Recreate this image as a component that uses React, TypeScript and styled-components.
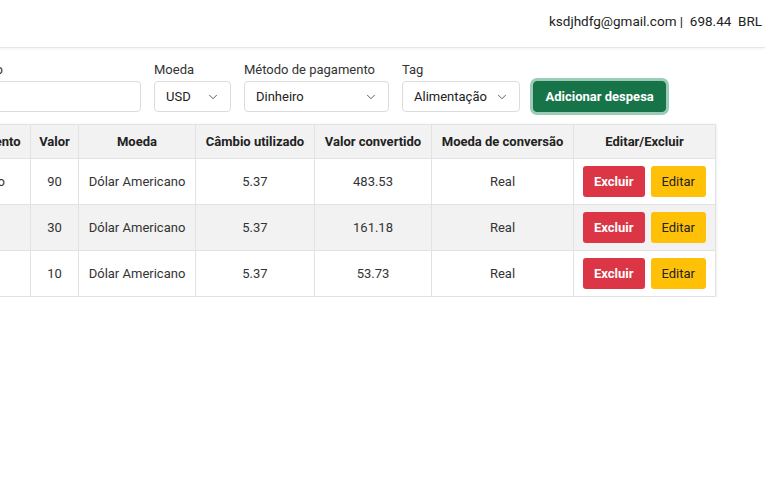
import styled, { createGlobalStyle } from "styled-components";
import { ChevronDown } from "lucide-react";

type Expense = {
  method: string;
  value: string;
  rate: string;
  converted: string;
};

const expenses: Expense[] = [
  { method: "Cartão de crédito", value: "90", rate: "5.37", converted: "483.53" },
  { method: "Dinheiro", value: "30", rate: "5.37", converted: "161.18" },
  { method: "Dinheiro", value: "10", rate: "5.37", converted: "53.73" },
];

const GlobalStyle = createGlobalStyle`
  html, body {
    margin: 0;
    padding: 0;
    background: #fff;
    overflow: hidden;
  }
  body {
    font-family: Roboto, "Liberation Sans", Arial, sans-serif;
    color: #212529;
  }
`;

const Select = ({ value, width }: { value: string; width: number }) => (
  <SelectBox $width={width}>
    <span>{value}</span>
    <ChevronDown size={14} strokeWidth={1.6} color="#555" />
  </SelectBox>
);

export default function App() {
  return (
    <>
      <GlobalStyle />
      <Header>
        <UserInfo>
          ksdjhdfg@gmail.com |&nbsp; 698.44&nbsp; BRL
        </UserInfo>
      </Header>

      <Form>
        <Field>
          <Label>Descrição</Label>
          <Input $width={196} />
        </Field>
        <Field>
          <Label>Moeda</Label>
          <Select value="USD" width={77} />
        </Field>
        <Field>
          <Label>Método de pagamento</Label>
          <Select value="Dinheiro" width={145} />
        </Field>
        <Field>
          <Label>Tag</Label>
          <Select value="Alimentação" width={118} />
        </Field>
        <AddButton>Adicionar despesa</AddButton>
      </Form>

      <Table>
        <colgroup>
          <col style={{ width: 151 }} />
          <col style={{ width: 48 }} />
          <col style={{ width: 117 }} />
          <col style={{ width: 119 }} />
          <col style={{ width: 117 }} />
          <col style={{ width: 142 }} />
          <col style={{ width: 142 }} />
        </colgroup>
        <thead>
          <tr>
            <Th>Método de pagamento</Th>
            <Th>Valor</Th>
            <Th>Moeda</Th>
            <Th>Câmbio utilizado</Th>
            <Th>Valor convertido</Th>
            <Th>Moeda de conversão</Th>
            <Th>Editar/Excluir</Th>
          </tr>
        </thead>
        <tbody>
          {expenses.map((e, i) => (
            <Row key={i} $striped={i % 2 === 1}>
              <Td>{e.method}</Td>
              <Td>{e.value}</Td>
              <Td>Dólar Americano</Td>
              <Td>{e.rate}</Td>
              <Td>{e.converted}</Td>
              <Td>Real</Td>
              <Td>
                <Actions>
                  <ActionButton $variant="danger">Excluir</ActionButton>
                  <ActionButton $variant="warning">Editar</ActionButton>
                </Actions>
              </Td>
            </Row>
          ))}
        </tbody>
      </Table>
    </>
  );
}

const Header = styled.header`
  height: 48px;
  display: flex;
  align-items: center;
  justify-content: flex-end;
  padding-right: 3px;
  border-bottom: 1px solid #e6e6e6;
  box-shadow: 0 1px 3px rgba(0, 0, 0, 0.06);
  box-sizing: border-box;
`;

const UserInfo = styled.span`
  font-size: 13.5px;
  color: #222;
  margin-top: -5px;
`;

const Form = styled.div`
  display: flex;
  align-items: flex-end;
  gap: 13px;
  margin: 14px 0 0 -55px;
`;

const Field = styled.label`
  display: flex;
  flex-direction: column;
  gap: 3px;
`;

const Label = styled.span`
  font-size: 13px;
  color: #333;
  line-height: 16px;
`;

const Input = styled.div<{ $width: number }>`
  width: ${(p) => p.$width}px;
  height: 31px;
  border: 1px solid #dcdcdc;
  border-radius: 4px;
  box-sizing: border-box;
`;

const SelectBox = styled.div<{ $width: number }>`
  width: ${(p) => p.$width}px;
  height: 31px;
  border: 1px solid #dcdcdc;
  border-radius: 4px;
  box-sizing: border-box;
  display: flex;
  align-items: center;
  justify-content: space-between;
  padding: 0 10px 0 11px;
  font-size: 13px;
  color: #222;
`;

const AddButton = styled.button`
  height: 31px;
  padding: 0 11.5px;
  border: 1px solid #157347;
  border-radius: 4px;
  background: #177449;
  color: #fff;
  font-family: inherit;
  font-size: 13px;
  font-weight: 700;
  box-shadow: 0 0 0 3px rgba(60, 153, 110, 0.5);
`;

const Table = styled.table`
  border-collapse: collapse;
  table-layout: fixed;
  width: 836px;
  margin: 12px 0 0 -121px;
  font-size: 13px;
  box-shadow: 0 1px 3px rgba(0, 0, 0, 0.12);
`;

const Th = styled.th`
  background: #f2f2f2;
  border: 1px solid #e2e2e2;
  height: 33px;
  padding: 0 8px;
  font-weight: 700;
  color: #222;
  text-align: center;
  white-space: nowrap;
`;

const Row = styled.tr<{ $striped: boolean }>`
  background: ${(p) => (p.$striped ? "#f2f2f2" : "#fff")};
`;

const Td = styled.td`
  border: 1px solid #e2e2e2;
  height: 45px;
  padding: 0 8px;
  text-align: center;
  color: #333;
  white-space: nowrap;
`;

const Actions = styled.div`
  display: flex;
  justify-content: center;
  gap: 6px;
`;

const ActionButton = styled.button<{ $variant: "danger" | "warning" }>`
  height: 31px;
  padding: 0 11px;
  border: none;
  border-radius: 3px;
  font-family: inherit;
  font-size: 13px;
  font-weight: ${(p) => (p.$variant === "danger" ? 700 : 400)};
  background: ${(p) => (p.$variant === "danger" ? "#dc3545" : "#ffc107")};
  color: ${(p) => (p.$variant === "danger" ? "#fff" : "#222")};
`;
